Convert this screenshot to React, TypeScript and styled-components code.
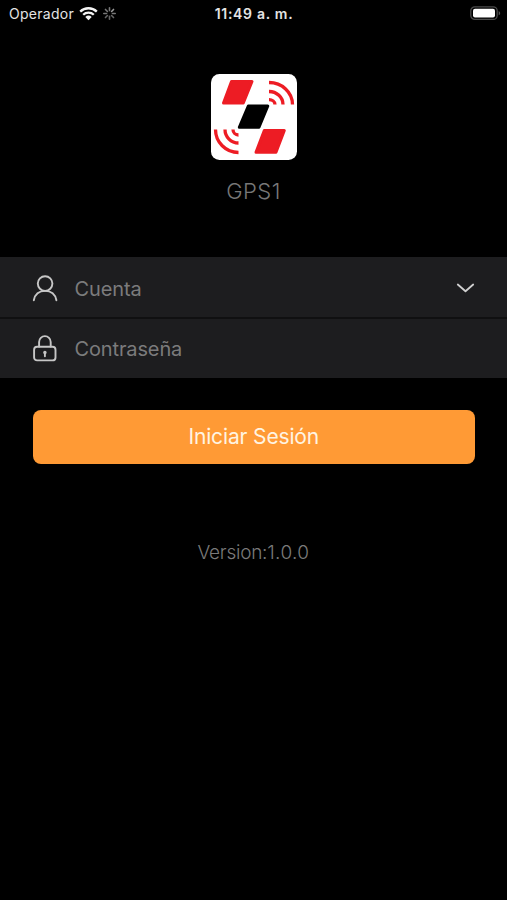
import React from 'react';
import styled, { createGlobalStyle } from 'styled-components';

const GlobalStyle = createGlobalStyle`
  * { box-sizing: border-box; }
  body { margin: 0; background: #000; }
`;

const Screen = styled.main`
  display: flex;
  flex-direction: column;
  width: 100%;
  height: 900px;
  background: #000;
  font-family: Inter, 'Liberation Sans', sans-serif;
`;

const StatusBar = styled.header`
  display: grid;
  grid-template-columns: 1fr auto 1fr;
  align-items: center;
  height: 28px;
  padding: 0 6px 0 9px;
  color: #e4e4e4;
  font-size: 14px;
  line-height: 20px;
`;

const Carrier = styled.div`
  display: flex;
  align-items: center;
  gap: 5px;
`;

const CarrierName = styled.span`
  letter-spacing: 0.28px;
`;

const Clock = styled.time`
  margin-right: 2px;
  font-weight: 600;
  letter-spacing: 0.7px;
`;

const Battery = styled.svg`
  justify-self: end;
`;

const Brand = styled.section`
  display: flex;
  flex-direction: column;
  align-items: center;
  height: 229px;
  padding-top: 46px;
`;

const AppName = styled.h1`
  margin: 17px 0 0;
  color: #777;
  font-size: 22px;
  font-weight: 300;
  letter-spacing: 0.5px;
  line-height: 28px;
`;

const Form = styled.form`
  display: flex;
  flex-direction: column;
`;

const Fields = styled.div`
  display: flex;
  flex-direction: column;
  gap: 2px;
  background: #101011;
`;

const Field = styled.label<{ $height: number; $inset?: number }>`
  display: flex;
  align-items: center;
  height: ${({ $height }) => $height}px;
  padding: ${({ $inset = 0 }) => $inset}px 32px 0;
  background: #1d1d1f;
`;

const FieldInput = styled.input`
  flex: 1;
  min-width: 0;
  margin-left: 16.5px;
  padding: 0;
  border: 0;
  outline: 0;
  background: transparent;
  color: #ddd;
  font: 400 20px/28px Inter, 'Liberation Sans', sans-serif;
  letter-spacing: -0.13px;

  &::placeholder { color: #7b7b7c; opacity: 1; }
`;

const SubmitButton = styled.button`
  height: 53.5px;
  margin: 32px 32px 0 32.5px;
  padding: 0;
  border: 0;
  border-radius: 8px;
  background: #ff9a35;
  color: #fff4e2;
  font: 400 21px/28px Inter, 'Liberation Sans', sans-serif;
  letter-spacing: -0.15px;
`;

const Version = styled.p`
  margin: 75px 0 0;
  color: #7a7a7a;
  font-size: 19px;
  font-weight: 300;
  line-height: 28px;
  text-align: center;
`;

const VersionLabel = styled.span`
  letter-spacing: -0.25px;
`;

const VersionNumber = styled.span`
  letter-spacing: 0.4px;
`;

const spokes = [
  { angle: 0, shade: '#777' },
  { angle: 45, shade: '#999' },
  { angle: 90, shade: '#777' },
  { angle: 135, shade: '#666' },
  { angle: 180, shade: '#666' },
  { angle: 225, shade: '#666' },
  { angle: 270, shade: '#777' },
  { angle: 315, shade: '#777' },
];

const WifiIcon = () => (
  <svg width="19" height="14" viewBox="0 0 19 14" fill="none">
    <path d="M1.2 4.6a12 12 0 0 1 16.6 0M4.2 7.7a7.6 7.6 0 0 1 10.6 0" stroke="#f4f4f4" strokeWidth="2.3" />
    <path d="M6.3 10a4.7 4.7 0 0 1 6.4 0L9.5 13.2z" fill="#f4f4f4" />
  </svg>
);

const Spinner = () => (
  <svg width="13" height="14" viewBox="0 0 13 14">
    {spokes.map(({ angle, shade }) => (
      <path key={angle} d="M6.5 .8v2.8" stroke={shade} strokeWidth="1.6" strokeLinecap="round" transform={`rotate(${angle} 6.5 6.5)`} />
    ))}
  </svg>
);

const BatteryIcon = () => (
  <Battery width="31" height="16" viewBox="0 0 31 16">
    <rect x=".8" y=".8" width="26.4" height="12.6" rx="4" fill="#000" stroke="#4b4b4b" strokeWidth="1.3" />
    <rect x="3" y="2.8" width="22" height="8.6" rx="2" fill="#fff" />
    <path d="M28.7 4.9c2 .8 2 3.6 0 4.4z" fill="#555" />
  </Battery>
);

const Logo = () => (
  <svg width="86" height="86" viewBox="0 0 86 86">
    <rect width="86" height="86" rx="8.5" fill="#fff" />
    <g strokeWidth="3" strokeLinejoin="round">
      <path d="M20.5 7.5H41L32.3 29H12.5z" fill="#ed1c24" stroke="#ed1c24" />
      <path d="M37.3 32H56.8L48 53.3H28.3z" fill="#000" stroke="#000" />
      <path d="M53.3 56.5H73.3L65 78.3H45z" fill="#ed1c24" stroke="#ed1c24" />
    </g>
    <g fill="none" stroke="#ed1c24" strokeWidth="3.3">
      <path d="M58 8.5A23.5 22 0 0 1 81.5 30.5M58 17.5A14 13 0 0 1 72 30.5M58 25.7A6 5 0 0 1 64 30.5" />
      <path d="M27.5 78.5A23 23 0 0 1 4.5 55.5M27.5 69A13.5 13.5 0 0 1 14 55.5M27.5 61A5.5 5.5 0 0 1 22 55.5" />
    </g>
  </svg>
);

const UserIcon = () => (
  <svg width="26" height="28" viewBox="0 0 26 28" fill="none" stroke="#c6c6c6" strokeWidth="1.9" strokeLinecap="round">
    <circle cx="13.1" cy="8.6" r="7.3" />
    <path d="M1.8 25.2C3 19.3 7.3 15.9 13.1 15.9S23.2 19.3 24.4 25.2" />
  </svg>
);

const LockIcon = () => (
  <svg width="26" height="28" viewBox="0 0 26 28" fill="none" stroke="#c6c6c6" strokeWidth="1.9" strokeLinecap="round">
    <rect x="2.1" y="11.8" width="21.4" height="13.6" rx="3" />
    <path d="M7.1 11.5V6.9a5.8 5.8 0 0 1 11.6 0v4.6" />
    <path d="M12.9 18v3.2" />
    <circle cx="12.9" cy="17.5" r=".8" fill="#c6c6c6" />
  </svg>
);

const ChevronIcon = () => (
  <svg width="19" height="12" viewBox="0 0 19 12" fill="none" stroke="#d0d0d0" strokeWidth="1.8" strokeLinecap="round" strokeLinejoin="round">
    <path d="M1.8 1.5 9.5 8.2 17.2 1.5" />
  </svg>
);

export default function App() {
  return (
    <>
      <GlobalStyle />
      <Screen>
        <StatusBar>
          <Carrier>
            <CarrierName>Operador</CarrierName>
            <WifiIcon />
            <Spinner />
          </Carrier>
          <Clock>11:49 a. m.</Clock>
          <BatteryIcon />
        </StatusBar>
        <Brand>
          <Logo />
          <AppName>GPS1</AppName>
        </Brand>
        <Form>
          <Fields>
            <Field $height={60} $inset={3}>
              <UserIcon />
              <FieldInput type="text" placeholder="Cuenta" />
              <ChevronIcon />
            </Field>
            <Field $height={59}>
              <LockIcon />
              <FieldInput type="password" placeholder="Contraseña" />
            </Field>
          </Fields>
          <SubmitButton type="button">Iniciar Sesión</SubmitButton>
        </Form>
        <Version>
          <VersionLabel>Version:</VersionLabel>
          <VersionNumber>1.0.0</VersionNumber>
        </Version>
      </Screen>
    </>
  );
}
